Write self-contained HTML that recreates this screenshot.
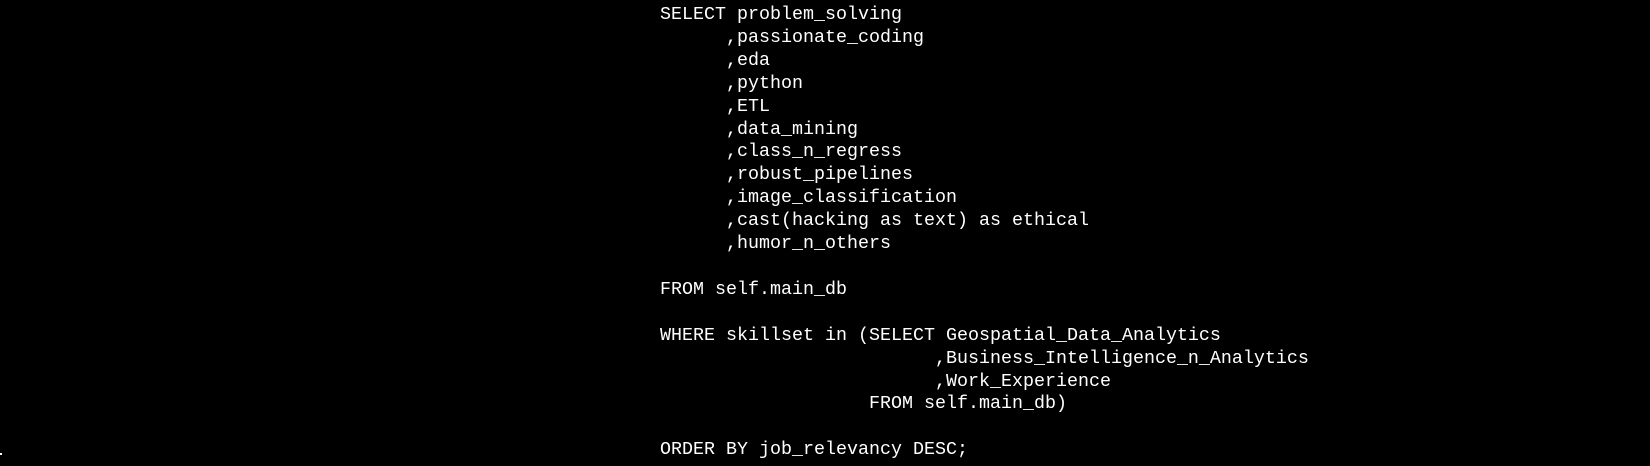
<!DOCTYPE html>
<html><head><meta charset="utf-8"><style>
html,body{margin:0;padding:0;background:#000;width:1650px;height:466px;overflow:hidden;position:relative}
pre{position:absolute;left:660px;top:4px;margin:0;font-family:"Liberation Mono",monospace;font-size:18.33px;line-height:22.9px;color:#fff}
.dot{position:absolute;left:0;top:453px;width:2px;height:2px;background:#fff}
</style></head><body>
<pre>SELECT problem_solving
      ,passionate_coding
      ,eda
      ,python
      ,ETL
      ,data_mining
      ,class_n_regress
      ,robust_pipelines
      ,image_classification
      ,cast(hacking as text) as ethical
      ,humor_n_others

FROM self.main_db

WHERE skillset in (SELECT Geospatial_Data_Analytics
                         ,Business_Intelligence_n_Analytics
                         ,Work_Experience
                   FROM self.main_db)

ORDER BY job_relevancy DESC;</pre>
<div class="dot"></div>
</body></html>
